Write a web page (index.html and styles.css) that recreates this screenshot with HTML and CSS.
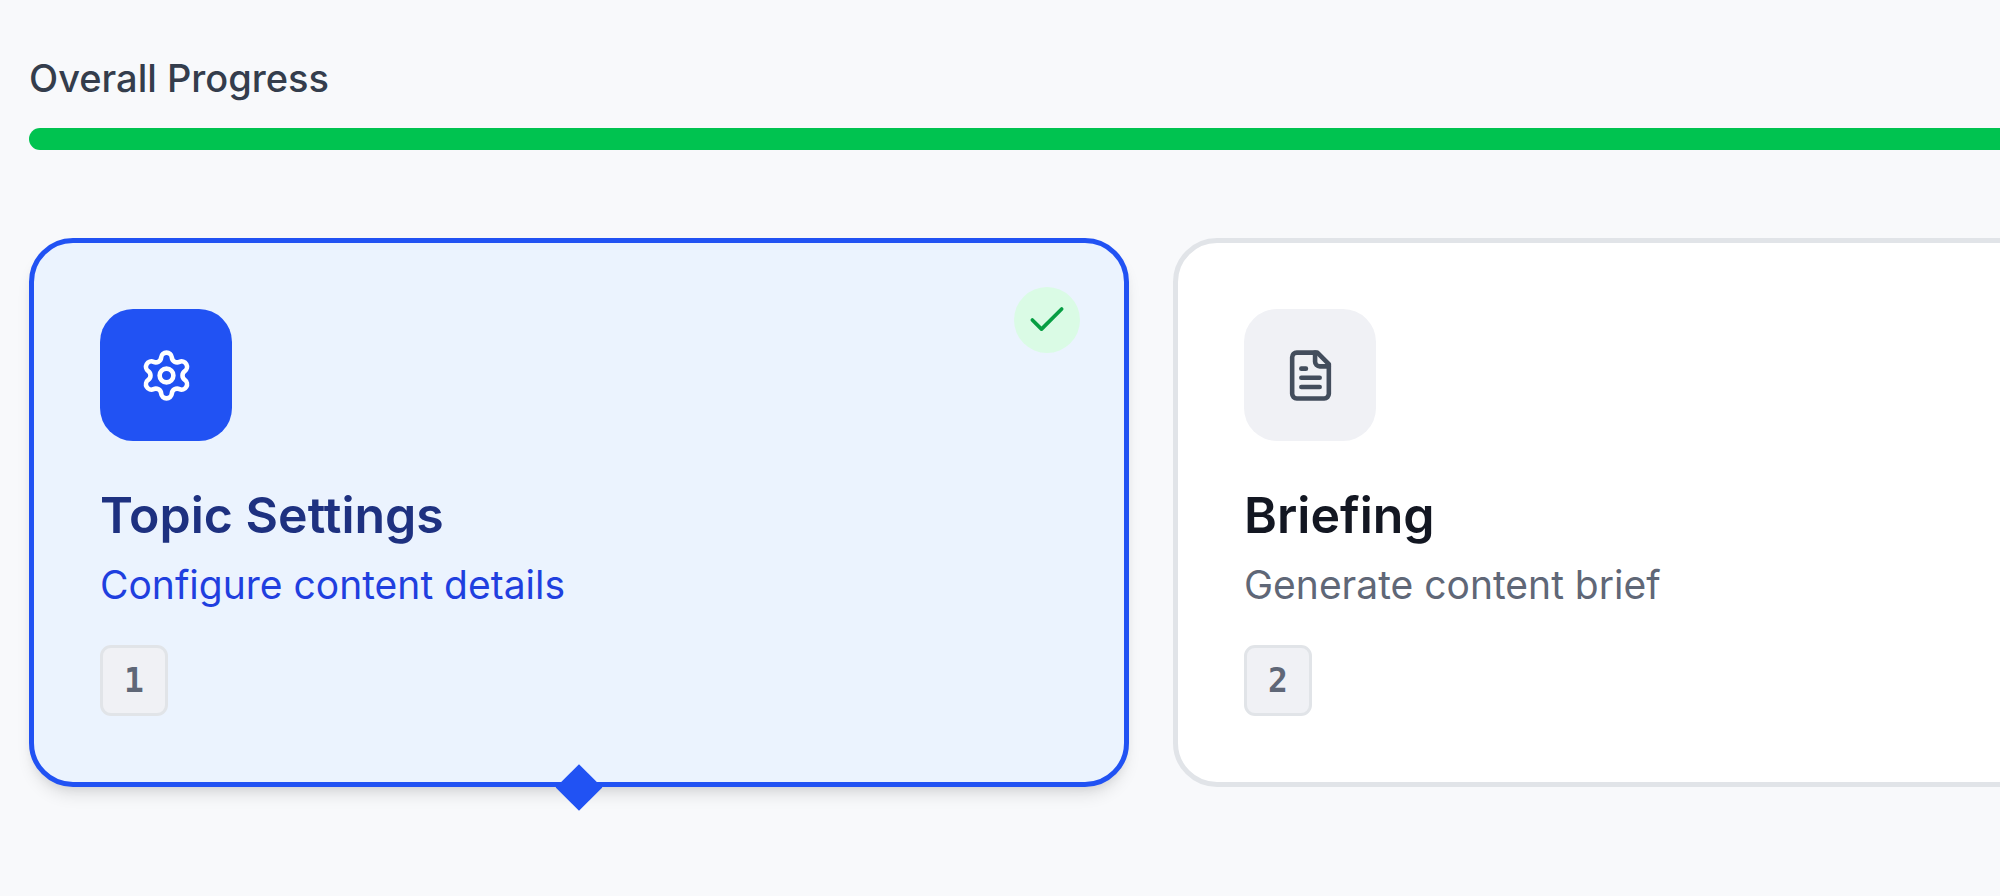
FILE: index.html
```html
<!DOCTYPE html>
<html lang="en">
<head>
  <meta charset="utf-8">
  <meta name="viewport" content="width=device-width, initial-scale=1">
  <title>Overall Progress</title>
  <link rel="stylesheet" href="styles.css">
</head>
<body>
  <div class="progress">
    <div class="progress-label" id="progressLabel">Overall Progress</div>
    <div class="progress-track" role="progressbar" aria-labelledby="progressLabel">
      <div class="progress-fill"></div>
    </div>
  </div>

  <div class="steps">
    <button type="button" class="step active">
      <span class="step-icon">
        <svg class="icon" viewBox="0 0 24 24">
          <path d="M9.671 4.136a2.34 2.34 0 0 1 4.659 0 2.34 2.34 0 0 0 3.319 1.915 2.34 2.34 0 0 1 2.33 4.033 2.34 2.34 0 0 0 0 3.831 2.34 2.34 0 0 1-2.33 4.033 2.34 2.34 0 0 0-3.319 1.915 2.34 2.34 0 0 1-4.659 0 2.34 2.34 0 0 0-3.32-1.915 2.34 2.34 0 0 1-2.33-4.033 2.34 2.34 0 0 0 0-3.831A2.34 2.34 0 0 1 6.35 6.051a2.34 2.34 0 0 0 3.319-1.915"/>
          <circle cx="12" cy="12" r="3"/>
        </svg>
      </span>
      <span class="step-title">Topic Settings</span>
      <span class="step-desc">Configure content details</span>
      <kbd class="step-key">1</kbd>
      <span class="step-check">
        <svg class="icon" viewBox="0 0 24 24">
          <path d="M20 6 9 17l-5-5"/>
        </svg>
      </span>
      <span class="step-pointer"></span>
    </button>

    <button type="button" class="step">
      <span class="step-icon">
        <svg class="icon" viewBox="0 0 24 24">
          <path d="M15 2H6a2 2 0 0 0-2 2v16a2 2 0 0 0 2 2h12a2 2 0 0 0 2-2V7Z"/>
          <path d="M14 2v4a2 2 0 0 0 2 2h4"/>
          <path d="M10 9H8"/>
          <path d="M16 13H8"/>
          <path d="M16 17H8"/>
        </svg>
      </span>
      <span class="step-title">Briefing</span>
      <span class="step-desc">Generate content brief</span>
      <kbd class="step-key">2</kbd>
    </button>
  </div>
</body>
</html>
```
FILE: styles.css
```css
* {
  box-sizing: border-box;
}

body {
  margin: 0;
  padding: 51px 0 88px 29px;
  font-family: Inter, "Liberation Sans", sans-serif;
  background-color: #f8f9fb;
  overflow-x: hidden;
}

.progress {
  margin-bottom: 88px;
}

.progress-label {
  margin-bottom: 22px;
  font-size: 38px;
  line-height: 55px;
  font-weight: 500;
  color: #343d4c;
}

.progress-track {
  height: 22px;
  border-radius: 11px 0 0 11px;
  background-color: #e1e4e8;
  overflow: hidden;
}

.progress-fill {
  width: 100%;
  height: 100%;
  background-color: #00c350;
}

/* the row of steps runs on past the right edge */
.steps {
  display: grid;
  grid-auto-flow: column;
  grid-auto-columns: 55vw;
  gap: 44px;
}

.step {
  position: relative;
  display: flex;
  flex-direction: column;
  align-items: flex-start;
  padding: 66px;
  border: 5px solid #e1e4e8;
  border-radius: 44px;
  background-color: white;
  font-family: inherit;
  text-align: left;
  cursor: pointer;
}

.step.active {
  border-color: #2152f3;
  background-color: #ebf3fe;
  box-shadow: 0 11px 16px -3px rgba(0, 0, 0, 0.1), 0 5px 11px -5px rgba(0, 0, 0, 0.1);
}

.icon {
  width: 55px;
  height: 55px;
  fill: none;
  stroke: currentColor;
  stroke-width: 2;
  stroke-linecap: round;
  stroke-linejoin: round;
}

.step-icon {
  display: flex;
  align-items: center;
  justify-content: center;
  width: 132px;
  height: 132px;
  margin-bottom: 44px;
  border-radius: 33px;
  background-color: #f0f1f5;
  color: #434d5c;
}

.active .step-icon {
  background-color: #2152f3;
  color: white;
}

.step-title {
  margin-bottom: 11px;
  font-size: 50px;
  line-height: 61px;
  font-weight: 600;
  color: #131722;
}

.active .step-title {
  color: #1e3180;
}

.step-desc {
  margin-bottom: 33px;
  font-size: 39px;
  line-height: 55px;
  color: #5f6777;
}

.active .step-desc {
  color: #1f3fdf;
}

.step-key {
  padding: 11px 21px;
  border: 3px solid #e1e4e8;
  border-radius: 11px;
  background-color: #f0f1f5;
  font-family: "DejaVu Sans Mono", monospace;
  font-size: 33px;
  line-height: 43px;
  font-weight: 700;
  color: #5f6777;
}

.step-check {
  position: absolute;
  top: 44px;
  right: 44px;
  display: flex;
  align-items: center;
  justify-content: center;
  width: 66px;
  height: 66px;
  border-radius: 50%;
  background-color: #dafbe5;
  color: #079e43;
}

.step-check .icon {
  width: 44px;
  height: 44px;
}

.step-pointer {
  position: absolute;
  left: 50%;
  bottom: -22px;
  width: 33px;
  height: 33px;
  background-color: #2152f3;
  transform: translateX(-50%) rotate(45deg);
}
```
